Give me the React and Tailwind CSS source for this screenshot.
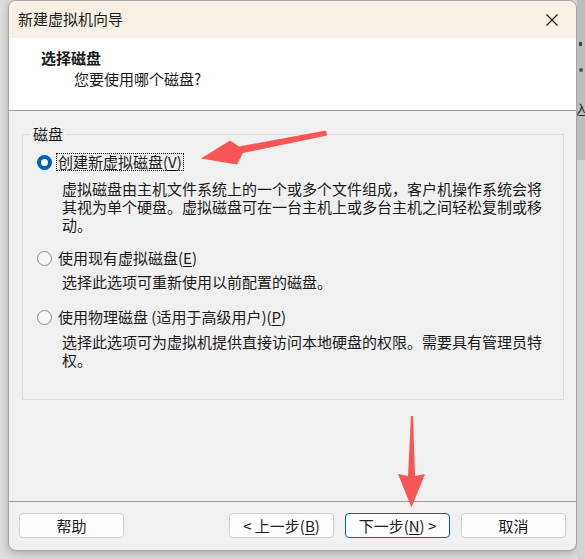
import React from 'react'

const FONT = { fontFamily: '"Microsoft YaHei UI", "Noto Sans CJK SC", "Noto Sans", sans-serif' }

function Radio({ checked }) {
  return checked ? (
    <span className="w-[15px] h-[15px] rounded-full bg-[#0060b8] flex items-center justify-center shrink-0">
      <span className="w-[7px] h-[7px] rounded-full bg-white" />
    </span>
  ) : (
    <span className="w-[15px] h-[15px] rounded-full border border-[#8a8a8a] bg-[#f7f7f7] shrink-0" />
  )
}

function Mn({ children }) {
  return <span className="underline underline-offset-2">{children}</span>
}

function Btn({ children, primary }) {
  return (
    <button
      className={
        'w-[105px] h-[25px] rounded-[4px] bg-[#fdfdfd] text-[15px] leading-none text-[#1a1a1a] flex items-center justify-center ' +
        (primary ? 'border border-[#0067c0]' : 'border border-[#d0d0d0]')
      }
    >
      {children}
    </button>
  )
}

function Lines({ lines, className }) {
  return (
    <div className={className}>
      {lines.map((l) => (
        <div key={l} className="h-[18px] leading-[18px] whitespace-nowrap">
          {l}
        </div>
      ))}
    </div>
  )
}

export default function App() {
  return (
    <div className="w-[585px] h-[559px] bg-[#dedede] flex overflow-hidden relative" style={FONT}>
      {/* dialog */}
      <div className="ml-[8px] w-[569px] shrink-0 h-[551px] flex flex-col bg-[#f0f0f0] border border-[#a6a6a6] rounded-[8px] overflow-hidden shadow-[0_2px_8px_rgba(0,0,0,0.25)]">
        {/* title bar */}
        <div className="h-[37px] shrink-0 bg-[#f7f1e5] flex items-center justify-between pl-[9px]">
          <span className="text-[15px] text-[#1a1a1a]">新建虚拟机向导</span>
          <div className="w-[46px] h-[37px] flex items-center justify-center mr-[1px]">
            <svg width="12" height="12" viewBox="0 0 12 12" stroke="#1a1a1a" strokeWidth="1.1">
              <path d="M0.5 0.5l11 11M11.5 0.5l-11 11" />
            </svg>
          </div>
        </div>

        {/* header */}
        <div className="h-[73px] shrink-0 bg-white border-b border-[#a0a0a0] pl-[32px] pt-[10px] text-[15px] text-[#1a1a1a]">
          <div className="font-bold leading-[20px]">选择磁盘</div>
          <div className="pl-[33px] leading-[20px] mt-[1px]">您要使用哪个磁盘?</div>
        </div>

        {/* body */}
        <div className="flex-1 pt-[23px] pl-[13px] pr-[12px] text-[15px] text-[#1a1a1a]">
          <div className="relative border border-[#dcdcdc] h-[266px] pt-[18px] pl-[14px]">
            <span className="absolute -top-[11px] left-[7px] px-[3px] bg-[#f0f0f0] leading-[20px]">磁盘</span>

            <div className="flex items-center h-[18px]">
              <Radio checked />
              <span className="ml-[5px] leading-[16px] outline-1 outline-dotted outline-black px-[1px]">
                创建新虚拟磁盘(<Mn>V</Mn>)
              </span>
            </div>
            <Lines
              className="pl-[25px] mt-[9px]"
              lines={[
                '虚拟磁盘由主机文件系统上的一个或多个文件组成，客户机操作系统会将',
                '其视为单个硬盘。虚拟磁盘可在一台主机上或多台主机之间轻松复制或移',
                '动。',
              ]}
            />

            <div className="flex items-center h-[18px] mt-[15px]">
              <Radio />
              <span className="ml-[6px] leading-[16px]">
                使用现有虚拟磁盘(<Mn>E</Mn>)
              </span>
            </div>
            <Lines className="pl-[25px] mt-[6px]" lines={['选择此选项可重新使用以前配置的磁盘。']} />

            <div className="flex items-center h-[18px] mt-[17px]">
              <Radio />
              <span className="ml-[6px] leading-[16px]">
                使用物理磁盘 (适用于高级用户)(<Mn>P</Mn>)
              </span>
            </div>
            <Lines
              className="pl-[25px] mt-[7px]"
              lines={['选择此选项可为虚拟机提供直接访问本地硬盘的权限。需要具有管理员特', '权。']}
            />
          </div>
        </div>

        {/* footer */}
        <div className="h-[49px] shrink-0 border-t border-[#a0a0a0] flex items-start pt-[11px] px-[10px]">
          <Btn>帮助</Btn>
          <div className="flex-1" />
          <div className="flex gap-[11px]">
            <Btn>&lt; 上一步(<Mn>B</Mn>)</Btn>
            <Btn primary>下一步(<Mn>N</Mn>) &gt;</Btn>
            <Btn>取消</Btn>
          </div>
        </div>
      </div>

      {/* window behind on the right */}
      <div className="flex-1 min-w-0 flex flex-col overflow-hidden">
        <div className="h-[160px] bg-[#bdbdbd] flex flex-col items-start pl-[2px] text-[#222] text-[14px] leading-none">
          <span className="mt-[42px] w-[3px] h-[4px] bg-[#444]" />
          <span className="mt-[22px] w-[4px] h-[4px] rounded-full bg-[#555]" />
          <span className="mt-[30px] -ml-[6px]">込</span>
        </div>
        <div className="flex-1 bg-[#d2d2d2]" />
      </div>

      {/* red annotation arrows */}
      <svg className="absolute left-0 top-0 pointer-events-none" width="585" height="559">
        <polygon
          points="326,130.5 327,135.5 243,153 237,164.5 201,158.5 230,140.5 239,146.5"
          fill="#f85555"
        />
        <polygon
          points="411,416 413,416 415,476 425,474 411.5,507.5 398,474 408,476"
          fill="#f85555"
        />
      </svg>
    </div>
  )
}
